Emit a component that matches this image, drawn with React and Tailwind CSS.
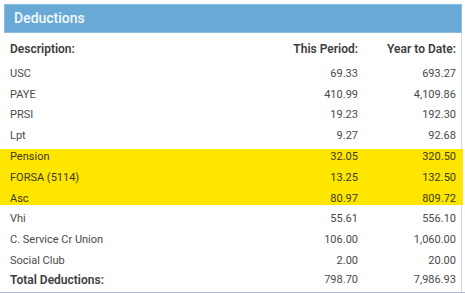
import React from "react";

const ROWS = [
  { label: "USC", period: "69.33", ytd: "693.27" },
  { label: "PAYE", period: "410.99", ytd: "4,109.86" },
  { label: "PRSI", period: "19.23", ytd: "192.30" },
  { label: "Lpt", period: "9.27", ytd: "92.68" },
];

const HIGHLIGHTED = [
  { label: "Pension", period: "32.05", ytd: "320.50" },
  { label: "FORSA (5114)", period: "13.25", ytd: "132.50" },
  { label: "Asc", period: "80.97", ytd: "809.72" },
];

const MORE = [
  { label: "Vhi", period: "55.61", ytd: "556.10" },
  { label: "C. Service Cr Union", period: "106.00", ytd: "1,060.00" },
  { label: "Social Club", period: "2.00", ytd: "20.00" },
];

const Row = ({ row, dark }) => (
  <div
    className={`relative flex items-center h-[20.8px] text-[11px] ${
      dark ? "text-[#3b3a1c]" : "text-[#4a4a4a]"
    }`}
  >
    <span className="flex-1">{row.label}</span>
    <span className="w-[80px] text-right">{row.period}</span>
    <span className="w-[98px] text-right">{row.ytd}</span>
  </div>
);

export default function App() {
  return (
    <div
      className="w-[465px] h-[293px] bg-white overflow-hidden"
      style={{ fontFamily: "Roboto, 'Liberation Sans', sans-serif" }}
    >
      <div className="ml-[4px] w-[458px] pt-[4px]">
        <div className="h-[29px] flex items-center px-[9px] bg-[#68a9d6] border border-[#8cbde0]">
          <span className="text-[14px] font-medium text-[#f4f9fd]">Deductions</span>
        </div>

        <div className="border-r border-[#d6d6d6] pl-[6px] pr-[5px]">
          <div className="flex items-center h-[30.6px] pt-[1px] text-[12px] font-semibold text-[#3d3d3d]">
            <span className="flex-1">Description:</span>
            <span className="w-[80px] text-right">This Period:</span>
            <span className="w-[98px] text-right">Year to Date:</span>
          </div>

          {ROWS.map((r) => (
            <Row key={r.label} row={r} />
          ))}

          <div className="relative">
            <div className="absolute left-[-10px] w-[463px] top-[2.4px] bottom-[4.6px] bg-[#ffe600]" />
            {HIGHLIGHTED.map((r) => (
              <Row key={r.label} row={r} dark />
            ))}
          </div>

          {MORE.map((r) => (
            <Row key={r.label} row={r} />
          ))}

          <div className="flex items-center h-[20.8px] pb-[3px] text-[12px] font-semibold text-[#3d3d3d]">
            <span className="flex-1">Total Deductions:</span>
            <span className="w-[80px] text-right font-normal text-[11px] text-[#4a4a4a]">798.70</span>
            <span className="w-[98px] text-right font-normal text-[11px] text-[#4a4a4a]">7,986.93</span>
          </div>
        </div>
        <div className="h-[2px] -ml-[4px] w-[465px] bg-[#aebbd0]" />
      </div>
    </div>
  );
}
